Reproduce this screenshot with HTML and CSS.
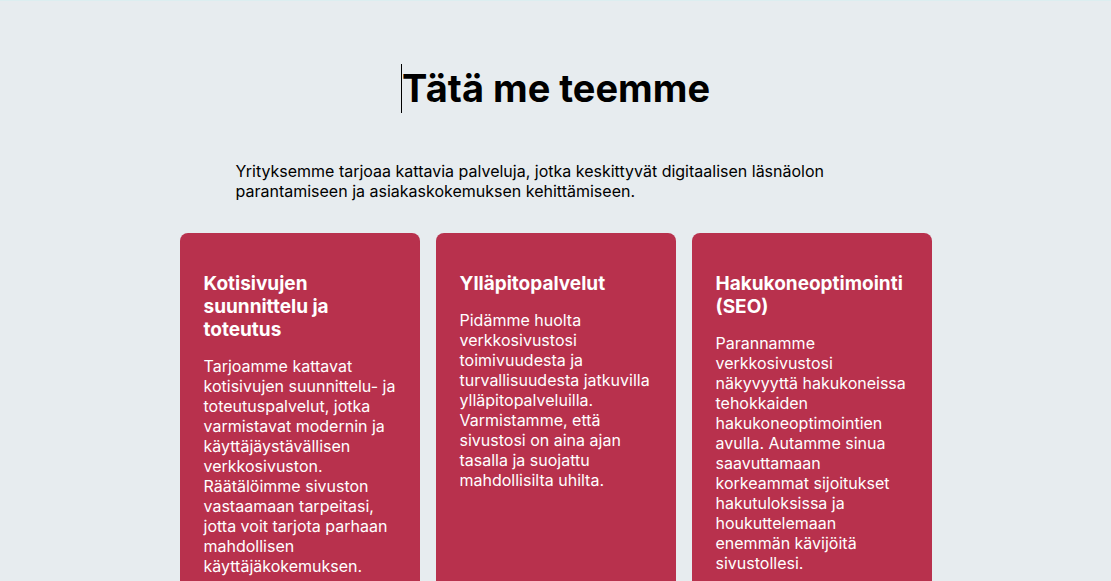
FILE: index.html
```html
<!DOCTYPE html>
<html lang="fi">
<head>
<meta charset="utf-8">
<title>Tätä me teemme</title>
<meta name="viewport" content="width=device-width, initial-scale=1">
<link rel="stylesheet" href="styles.css">
</head>
<body>
<main class="services">
  <h1 class="title">Tätä me teemme</h1>
  <p class="intro">Yrityksemme tarjoaa kattavia palveluja, jotka keskittyvät digitaalisen läsnäolon parantamiseen ja asiakaskokemuksen kehittämiseen.</p>
  <div class="cards">
    <article class="card">
      <h3 class="card-title">Kotisivujen suunnittelu ja toteutus</h3>
      <p class="card-text">Tarjoamme kattavat kotisivujen suunnittelu- ja toteutuspalvelut, jotka varmistavat modernin ja käyttäjäystävällisen verkkosivuston. Räätälöimme sivuston vastaamaan tarpeitasi, jotta voit tarjota parhaan mahdollisen käyttäjäkokemuksen.</p>
    </article>
    <article class="card">
      <h3 class="card-title">Ylläpitopalvelut</h3>
      <p class="card-text">Pidämme huolta verkkosivustosi toimivuudesta ja turvallisuudesta jatkuvilla ylläpitopalveluilla. Varmistamme, että sivustosi on aina ajan tasalla ja suojattu mahdollisilta uhilta.</p>
    </article>
    <article class="card">
      <h3 class="card-title">Hakukoneoptimointi (SEO)</h3>
      <p class="card-text">Parannamme verkkosivustosi näkyvyyttä hakukoneissa tehokkaiden hakukoneoptimointien avulla. Autamme sinua saavuttamaan korkeammat sijoitukset hakutuloksissa ja houkuttelemaan enemmän kävijöitä sivustollesi.</p>
    </article>
  </div>
</main>
</body>
</html>
```

FILE: styles.css
```css
* {
  box-sizing: border-box;
}

body {
  margin: 0;
  background: #e7ecef;
  color: #000;
  font-family: Inter, "Liberation Sans", sans-serif;
  font-size: 16px;
  line-height: 20px;
  scrollbar-width: none;
}

html {
  scrollbar-width: none;
}

.services {
  display: flex;
  flex-direction: column;
  align-items: center;
  padding: 63px 16px 64px;
  border-top: 1px solid #dceef0;
}

.title {
  margin: 0;
  border-left: 1px solid #000;
  font-size: 38px;
  font-weight: 700;
  line-height: 49px;
}

.intro {
  width: 100%;
  max-width: 640px;
  margin: 48px 0 32px;
}

.cards {
  display: grid;
  grid-template-columns: repeat(3, 1fr);
  gap: 16px;
  width: 100%;
  max-width: 752px;
}

.card {
  padding: 39px 24px;
  border-radius: 8px;
  background: #b8314d;
  color: #fff;
}

.card-title {
  margin: 0 0 15px;
  font-size: 19px;
  font-weight: 700;
  line-height: 23px;
}

.card-text {
  margin: 0;
}
```
